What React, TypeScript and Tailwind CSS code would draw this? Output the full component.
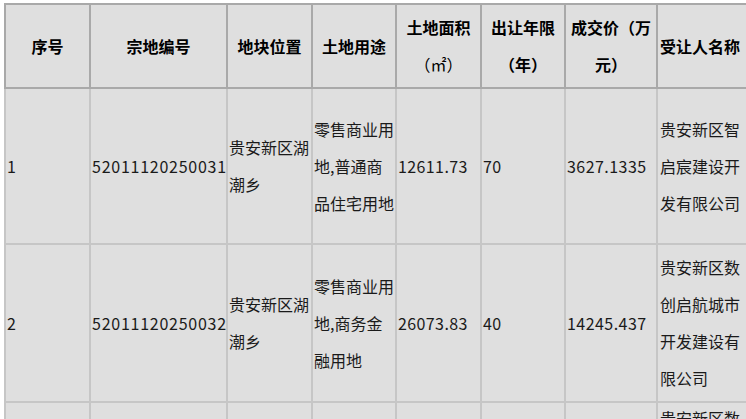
const font = { fontFamily: '"Noto Sans CJK SC", "Noto Sans", sans-serif' }

type Row = {
  no: string
  code: string
  place: string[]
  usage: string[]
  area: string
  years: string
  price: string
  buyer: string[]
  height: string
}

const rows: Row[] = [
  {
    no: '1',
    code: '52011120250031',
    place: ['贵安新区湖', '潮乡'],
    usage: ['零售商业用', '地,普通商', '品住宅用地'],
    area: '12611.73',
    years: '70',
    price: '3627.1335',
    buyer: ['贵安新区智', '启宸建设开', '发有限公司'],
    height: 'h-[156px]',
  },
  {
    no: '2',
    code: '52011120250032',
    place: ['贵安新区湖', '潮乡'],
    usage: ['零售商业用', '地,商务金', '融用地'],
    area: '26073.83',
    years: '40',
    price: '14245.437',
    buyer: ['贵安新区数', '创启航城市', '开发建设有', '限公司'],
    height: 'h-[158px]',
  },
]

const th = 'border-2 border-[#a9a9a9] px-[1px] text-center align-middle font-bold text-black'
const td = 'border-2 border-[#c6c6c6] px-[1px] align-middle text-left text-[#1a1a1a] whitespace-nowrap'

function Lines({ items }: { items: string[] }) {
  return (
    <>
      {items.map((t, i) => (
        <div key={i}>{t}</div>
      ))}
    </>
  )
}

export default function App() {
  return (
    <div className="w-[746px] h-[419px] overflow-hidden bg-white pl-[4px] pt-[3px]" style={font}>
      <table className="table-fixed border-collapse bg-[#dfdfdf] text-[16px] leading-[37px] w-[760px]">
        <colgroup>
          <col className="w-[85px]" />
          <col className="w-[137px]" />
          <col className="w-[85px]" />
          <col className="w-[84px]" />
          <col className="w-[85px]" />
          <col className="w-[84px]" />
          <col className="w-[92px]" />
          <col className="w-[108px]" />
        </colgroup>
        <thead>
          <tr className="h-[84px]">
            <th className={th}>序号</th>
            <th className={th}>宗地编号</th>
            <th className={th}>地块位置</th>
            <th className={th}>土地用途</th>
            <th className={th}>
              <div>土地面积</div>
              <div className="font-normal">（㎡）</div>
            </th>
            <th className={th}>
              <div>出让年限</div>
              <div>（年）</div>
            </th>
            <th className={th}>
              <div>成交价（万</div>
              <div>元）</div>
            </th>
            <th className={`${th} pl-[2px] text-left whitespace-nowrap`}>受让人名称</th>
          </tr>
        </thead>
        <tbody>
          {rows.map((r) => (
            <tr key={r.no} className={r.height}>
              <td className={td}>{r.no}</td>
              <td className={`${td} tracking-[0.75px]`}>{r.code}</td>
              <td className={td}>
                <Lines items={r.place} />
              </td>
              <td className={td}>
                <Lines items={r.usage} />
              </td>
              <td className={`${td} tracking-[0.4px]`}>{r.area}</td>
              <td className={`${td} tracking-[0.4px]`}>{r.years}</td>
              <td className={`${td} tracking-[0.45px]`}>{r.price}</td>
              <td className={`${td} pl-[2px]`}>
                <Lines items={r.buyer} />
              </td>
            </tr>
          ))}
          <tr className="h-[160px]">
            <td className={td}></td>
            <td className={td}></td>
            <td className={td}></td>
            <td className={td}></td>
            <td className={td}></td>
            <td className={td}></td>
            <td className={td}></td>
            <td className={`${td} pl-[2px] align-top`}>
              <div className="-mt-[3px]">贵安新区数</div>
            </td>
          </tr>
        </tbody>
      </table>
    </div>
  )
}
